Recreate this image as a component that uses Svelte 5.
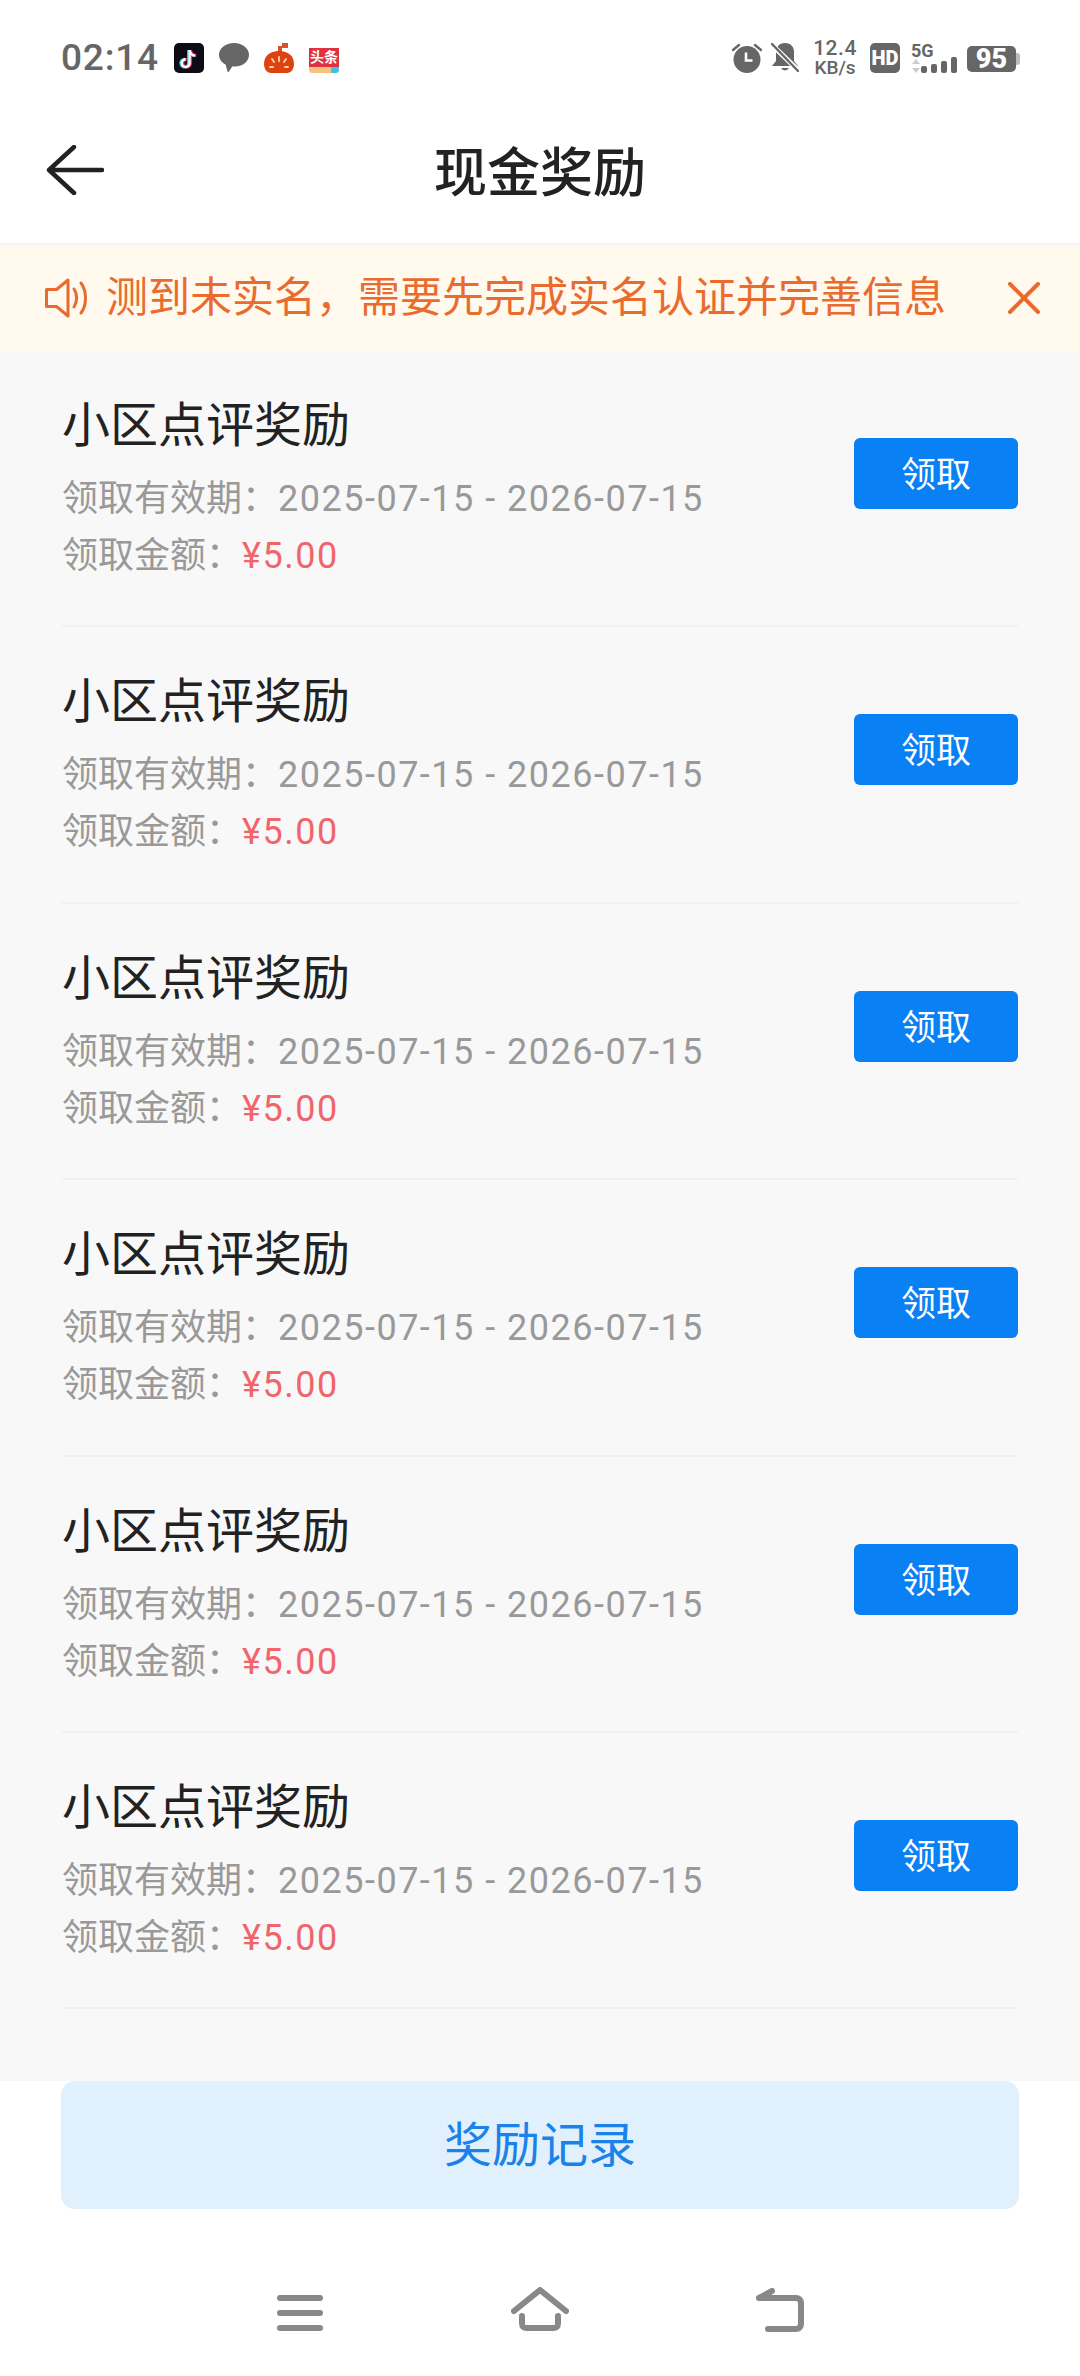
<script>
	const rewards = Array.from({ length: 6 }, () => ({
		title: '小区点评奖励',
		period: '2025-07-15 - 2026-07-15',
		amount: '¥5.00'
	}));
</script>

<div class="page">
	<div class="status">
		<span class="time">02:14</span>
		<div class="apps">
			<svg class="app" viewBox="0 0 30 30">
				<rect width="30" height="30" rx="5" fill="#0e0b16" />
				<path d="M15.6 6.5v13a3.9 3.9 0 1 1-3.9-3.9M15.6 6.5c.4 3.2 2.4 5.2 5.6 5.5" fill="none" stroke="#29d6e0" stroke-width="3" transform="translate(-1 .6)" />
				<path d="M15.6 6.5v13a3.9 3.9 0 1 1-3.9-3.9M15.6 6.5c.4 3.2 2.4 5.2 5.6 5.5" fill="none" stroke="#f0305a" stroke-width="3" transform="translate(1 .6)" />
				<path d="M15.6 6.5v13a3.9 3.9 0 1 1-3.9-3.9M15.6 6.5c.4 3.2 2.4 5.2 5.6 5.5" fill="none" stroke="#fff" stroke-width="2.4" transform="translate(0 .6)" />
			</svg>
			<svg class="app" viewBox="0 0 30 30">
				<path d="M15 0C6.7 0 0 5.2 0 11.800c0 4.200 2.600 7.700 6.600 9.800l1.900 7c.3.500.9.500 1.300.1l3.600-5.400c.9.100 1.700.2 2.600.2 8.300 0 14-5.300 14-11.700S23.300 0 15 0z" fill="#666" />
			</svg>
			<svg class="app" viewBox="0 0 30 30">
				<rect x="18" y="0" width="6" height="5" fill="#d9512c" />
				<rect x="14" y="3" width="4" height="6" fill="#d9512c" />
				<path d="M15 8C6 8 0 13 0 21c0 5 3 9 7 9h16c4 0 7-4 7-9 0-8-6-13-15-13z" fill="#dd4210" />
				<path d="M15 14v4M8 16l2 3M22 16l-2 3M6 24h3M21 24h3" stroke="#ffd9a8" stroke-width="1.800" stroke-linecap="round" />
			</svg>
			<div class="toutiao">
				<span class="toutiao-top">头条</span>
				<span class="toutiao-bottom"></span>
			</div>
		</div>
		<div class="system">
			<svg class="alarm" viewBox="0 0 30 30">
				<circle cx="15" cy="16.500" r="13.500" fill="#666" />
				<path d="M1 7l6-5M29 7l-6-5" stroke="#666" stroke-width="2.400" stroke-linecap="round" />
				<path d="M14 9.500v8h6.500" fill="none" stroke="#fff" stroke-width="2.600" />
			</svg>
			<svg class="bell" viewBox="0 0 28 30">
				<path d="M14 0c-6 0-9 4-9 9v9l-4 5h26l-4-5V9c0-5-3-9-9-9zM10 25a4.500 4.500 0 0 0 8 0z" fill="#666" />
				<path d="M-1 0L28 28" stroke="#fff" stroke-width="5" />
				<path d="M1 1L27 28" stroke="#666" stroke-width="2.400" stroke-linecap="round" />
			</svg>
			<div class="speed">
				<span class="speed-num">12.4</span>
				<span class="speed-unit">KB/s</span>
			</div>
			<span class="hd">HD</span>
			<div class="signal">
				<div class="signal-left">
					<span class="five-g">5G</span>
					<svg class="arrows" viewBox="0 0 8 14">
						<path d="M4 0l4 5H0z" fill="#ccc" />
						<path d="M4 14l4-5H0z" fill="#ccc" />
					</svg>
				</div>
				<div class="bars">
					<i style="height: 7px"></i>
					<i style="height: 9px"></i>
					<i style="height: 12px"></i>
					<i style="height: 16px"></i>
				</div>
			</div>
			<div class="battery">
				<span class="battery-body">95</span>
				<span class="battery-cap"></span>
			</div>
		</div>
	</div>

	<header class="header">
		<svg class="back" viewBox="0 0 58 50">
			<path d="M28 2L3 25l25 23M3 25h53" fill="none" stroke="#222" stroke-width="4.500" stroke-linecap="round" stroke-linejoin="round" />
		</svg>
		<h1 class="title">现金奖励</h1>
	</header>

	<div class="notice">
		<svg class="speaker" viewBox="0 0 46 40">
			<path d="M1.500 11.500h10L23 2v36L11.500 28.500h-10z" fill="none" stroke="#ea6a2c" stroke-width="3" stroke-linejoin="round" />
			<path d="M29 11c3.500 5 3.500 13 0 18M36 5c6 8 6 22 0 30" fill="none" stroke="#ea6a2c" stroke-width="3" stroke-linecap="round" />
		</svg>
		<span class="notice-text">测到未实名，需要先完成实名认证并完善信息</span>
		<svg class="close" viewBox="0 0 32 32">
			<path d="M2 2l28 28M30 2L2 30" stroke="#ea6a2c" stroke-width="4" stroke-linecap="round" />
		</svg>
	</div>

	<div class="list">
		{#each rewards as reward}
			<div class="row">
				<div class="info">
					<div class="name">{reward.title}</div>
					<div class="meta first">领取有效期：<span class="num">{reward.period}</span></div>
					<div class="meta">领取金额：<span class="num amount">{reward.amount}</span></div>
				</div>
				<button class="claim">领取</button>
			</div>
		{/each}
	</div>

	<div class="footer">
		<button class="records">奖励记录</button>
		<nav class="nav">
			<svg class="nav-menu" viewBox="0 0 46 36">
				<path d="M3 3h40M3 18h40M3 33h40" stroke="#888" stroke-width="6" stroke-linecap="round" />
			</svg>
			<svg class="nav-home" viewBox="0 0 58 44">
				<path d="M3 24L29 3l26 21" fill="none" stroke="#888" stroke-width="6" stroke-linecap="round" stroke-linejoin="round" />
				<path d="M11 29v7c0 4 2 5 5 5h26c3 0 5-1 5-5v-7" fill="none" stroke="#888" stroke-width="6" stroke-linecap="round" />
			</svg>
			<svg class="nav-back" viewBox="0 0 48 44">
				<path d="M3 10h37c3 0 5 2 5 5v21c0 3-2 5-5 5H12M3 10l13-7" fill="none" stroke="#888" stroke-width="6" stroke-linecap="round" stroke-linejoin="round" />
			</svg>
		</nav>
	</div>
</div>

<style>
	:global(body) {
		margin: 0;
		background: #fff;
	}

	.page {
		width: 1080px;
		height: 2376px;
		display: flex;
		flex-direction: column;
		font-family: Roboto, 'Noto Sans CJK SC', sans-serif;
		overflow: hidden;
	}

	.status {
		height: 115px;
		flex: none;
		box-sizing: border-box;
		padding: 43px 60px 0 61px;
		display: flex;
		align-items: flex-start;
		color: #666;
	}

	.time {
		font-size: 37px;
		font-weight: 500;
		line-height: 30px;
		letter-spacing: 0.8px;
		width: 113px;
	}

	.apps {
		display: flex;
		gap: 15px;
	}

	.app {
		width: 30px;
		height: 30px;
		display: block;
	}

	.toutiao {
		width: 30px;
		height: 25px;
		margin-top: 5px;
		display: flex;
		flex-direction: column;
	}

	.toutiao-top {
		height: 19px;
		background: #e0313f;
		color: #fff;
		font-size: 14px;
		font-weight: 700;
		line-height: 19px;
		text-align: center;
		white-space: nowrap;
	}

	.toutiao-bottom {
		height: 6px;
		background: linear-gradient(90deg, #f8c27c 75%, #3cc4e8 75%);
		border-radius: 0 0 3px 3px;
	}

	.system {
		margin-left: auto;
		display: flex;
		align-items: flex-start;
	}

	.alarm {
		width: 30px;
		height: 30px;
		display: block;
	}

	.bell {
		width: 28px;
		height: 30px;
		margin-left: 9px;
		display: block;
	}

	.speed {
		width: 46px;
		margin-left: 13px;
		margin-top: -4px;
		display: flex;
		flex-direction: column;
		align-items: center;
		font-weight: 500;
		line-height: 19px;
	}

	.speed-num {
		font-size: 21px;
		letter-spacing: 0.5px;
	}

	.speed-unit {
		font-size: 19px;
	}

	.hd {
		width: 30px;
		height: 30px;
		margin-left: 12px;
		background: #666;
		border-radius: 5px;
		color: #fff;
		font-size: 20px;
		font-weight: 900;
		line-height: 30px;
		text-align: center;
	}

	.signal {
		margin-left: 11px;
		width: 46px;
		height: 30px;
		position: relative;
	}

	.signal-left {
		display: flex;
		flex-direction: column;
	}

	.five-g {
		font-size: 18px;
		font-weight: 700;
		line-height: 16px;
	}

	.arrows {
		width: 8px;
		height: 14px;
		margin-left: 1px;
	}

	.bars {
		position: absolute;
		right: 0;
		bottom: 0;
		display: flex;
		align-items: flex-end;
		gap: 4px;
	}

	.bars i {
		width: 6px;
		background: #666;
		border-radius: 2px;
		display: block;
	}

	.battery {
		margin-left: 10px;
		margin-top: 3px;
		display: flex;
		align-items: center;
	}

	.battery-body {
		width: 49px;
		height: 26px;
		background: #666;
		border-radius: 5px;
		color: #fff;
		font-size: 27px;
		font-weight: 900;
		line-height: 26px;
		text-align: center;
	}

	.battery-cap {
		width: 4px;
		height: 12px;
		background: #bbb;
		border-radius: 0 3px 3px 0;
	}

	.header {
		height: 130px;
		flex: none;
		position: relative;
		display: flex;
		align-items: center;
		justify-content: center;
		border-bottom: 2px solid #f3f3f3;
		box-sizing: border-box;
	}

	.back {
		position: absolute;
		left: 46px;
		top: 30px;
		width: 58px;
		height: 50px;
	}

	.title {
		margin: 0 0 10px;
		font-size: 53px;
		font-weight: 500;
		color: #222;
		line-height: 60px;
	}

	.notice {
		height: 106px;
		flex: none;
		box-sizing: border-box;
		padding: 0 40px 0 45px;
		background: #fff9ee;
		display: flex;
		align-items: center;
	}

	.speaker {
		width: 46px;
		height: 40px;
		flex: none;
	}

	.notice-text {
		margin-left: 15px;
		margin-bottom: 9px;
		font-size: 42px;
		color: #e96c2e;
		white-space: nowrap;
	}

	.close {
		width: 32px;
		height: 32px;
		margin-left: auto;
	}

	.list {
		height: 1730px;
		flex: none;
		box-sizing: border-box;
		padding: 0 62px;
		background: #f8f8f8;
	}

	.row {
		height: 276.4px;
		box-sizing: border-box;
		border-bottom: 2px solid #f0f0f0;
		padding-top: 45px;
		display: flex;
		justify-content: space-between;
		align-items: flex-start;
	}

	.name {
		font-size: 48px;
		color: #222;
		line-height: 60px;
	}

	.meta {
		font-size: 36px;
		color: #999;
		line-height: 57px;
	}

	.num {
		letter-spacing: 1.5px;
	}

	.first {
		margin-top: 15px;
	}

	.amount {
		color: #f0656b;
	}

	.claim {
		width: 164px;
		height: 71px;
		margin-top: 42px;
		padding: 0 0 4px;
		border: none;
		border-radius: 6px;
		background: #0a80f5;
		color: #fff;
		font-family: inherit;
		font-size: 35px;
	}

	.footer {
		flex: 1;
		display: flex;
		flex-direction: column;
		background: #fff;
	}

	.records {
		width: 958px;
		height: 128px;
		margin: 0 0 0 61px;
		padding: 0 0 8px;
		border: none;
		border-radius: 14px;
		background: #e1f0fd;
		color: #1a82e8;
		font-family: inherit;
		font-size: 48px;
		flex: none;
	}

	.nav {
		flex: 1;
		position: relative;
	}

	.nav svg {
		position: absolute;
		display: block;
	}

	.nav-menu {
		left: 277px;
		top: 86px;
		width: 46px;
		height: 36px;
	}

	.nav-home {
		left: 511px;
		top: 78px;
		width: 58px;
		height: 44px;
	}

	.nav-back {
		left: 756px;
		top: 79px;
		width: 48px;
		height: 44px;
	}
</style>
